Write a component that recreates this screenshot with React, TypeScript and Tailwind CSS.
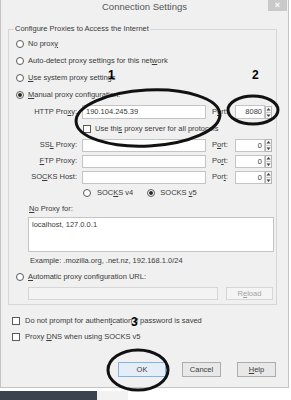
import React from "react";

const Radio = ({ checked = false }: { checked?: boolean }) => (
  <span className="w-[8px] h-[8px] shrink-0 rounded-full border border-[#5a5a5a] bg-white flex items-center justify-center">
    {checked && <span className="w-[4px] h-[4px] rounded-full bg-[#2a2a2a]" />}
  </span>
);

const Check = () => <span className="w-[8px] h-[8px] shrink-0 border border-[#5a5a5a] bg-white" />;

const U = ({ children }: { children: React.ReactNode }) => <span className="underline underline-offset-1">{children}</span>;

const Spinner = () => (
  <svg width="7" height="13" viewBox="0 0 7 13" className="shrink-0">
    <rect x="0.5" y="0.5" width="6" height="12" fill="#f4f4f4" stroke="#b5b5b5" />
    <line x1="0.5" y1="6.5" x2="6.5" y2="6.5" stroke="#c8c8c8" />
    <polygon points="3.5,2 5.5,4.5 1.5,4.5" fill="#444" />
    <polygon points="1.5,8.5 5.5,8.5 3.5,11" fill="#444" />
  </svg>
);

const ProxyRow = ({ label, port, portLabel }: { label: React.ReactNode; port: string; portLabel: React.ReactNode }) => (
  <div className="flex items-center h-[16px]">
    <div className="w-[68px] text-right">{label}</div>
    <div className="ml-[5px] w-[124px] h-[13px] bg-white border border-[#c4c4c4]" />
    <div className="ml-[6px] w-[23px]">{portLabel}</div>
    <div className="w-[30px] h-[13px] bg-white border border-[#c4c4c4] text-right pr-[2px] leading-[11px]">{port}</div>
    <Spinner />
  </div>
);

const Button = ({ children, w, primary = false }: { children: React.ReactNode; w: string; primary?: boolean }) => (
  <div className={`${w} h-[15px] flex items-center justify-center border ${primary ? "border-[#7eb4ea] bg-[#e5eef7]" : "border-[#adadad] bg-[#e8e8e8]"}`}>
    {children}
  </div>
);

export default function App() {
  return (
    <div className="relative w-[291px] h-[400px] overflow-hidden bg-white text-[7.5px] leading-[10px] text-[#3a3a3a]" style={{ fontFamily: '"Liberation Sans", Arial, sans-serif' }}>
      <div className="w-[289px] h-[388px] shrink-0 bg-[#f0f0f0] border-x border-b border-[#c4c4c4] flex flex-col">
        <div className="grid grid-cols-[1fr_auto_1fr] h-[17px] shrink-0">
          <div />
          <div className="text-[9.5px] leading-[14px] text-[#555]">Connection Settings</div>
          <div className="flex justify-end pr-[1px]">
            <div className="w-[19px] h-[11px] bg-[#c9c9c9] text-white text-[9px] leading-[10px] text-center font-bold">×</div>
          </div>
        </div>

        {/* group box */}
        <div className="ml-[7px] mt-[12px] w-[269px] border border-[#d6d6d6] pb-[4px] shrink-0">
          <div className="-mt-[6px] ml-[5px] px-[1px] w-fit h-[10px] bg-[#f0f0f0]">Configure Proxies to Access the Internet</div>
          <div className="mt-[1px] pl-[7px] flex flex-col">
            <div className="flex items-center gap-[4px] h-[17px]"><Radio /><span>No prox<U>y</U></span></div>
            <div className="flex items-center gap-[4px] h-[17px]"><Radio /><span>Auto-detect proxy settings for this net<U>w</U>ork</span></div>
            <div className="flex items-center gap-[4px] h-[17px]"><Radio /><span><U>U</U>se system proxy settings</span></div>
            <div className="flex items-center gap-[4px] h-[17px]"><Radio checked /><span><U>M</U>anual proxy configuration:</span></div>
          </div>
          <div className="flex flex-col">
            <div className="flex items-center h-[18px]">
              <div className="w-[68px] text-right">HTTP Pro<U>x</U>y:</div>
              <div className="ml-[5px] w-[124px] h-[14px] bg-white border border-[#c4c4c4] pl-[3px] leading-[12px]">190.104.245.39</div>
              <div className="ml-[6px] w-[23px]">P<U>o</U>rt:</div>
              <div className="w-[30px] h-[14px] bg-white border border-[#c4c4c4] text-right pr-[2px] leading-[12px]">8080</div>
              <Spinner />
            </div>
            <div className="flex items-center gap-[4px] h-[16px] pl-[74px]"><Check /><span>Use thi<U>s</U> proxy server for all protocols</span></div>
            <ProxyRow label={<>SS<U>L</U> Proxy:</>} port="0" portLabel={<>P<U>o</U>rt:</>} />
            <ProxyRow label={<><U>F</U>TP Proxy:</>} port="0" portLabel={<>Po<U>r</U>t:</>} />
            <ProxyRow label={<>SO<U>C</U>KS Host:</>} port="0" portLabel={<>Por<U>t</U>:</>} />
            <div className="flex items-center h-[16px] pl-[74px]">
              <Radio /><span className="ml-[6px]">SOC<U>K</U>S v4</span>
              <span className="ml-[14px]"><Radio checked /></span><span className="ml-[5px]">SOCKS <U>v</U>5</span>
            </div>
          </div>
          <div className="pl-[19px] flex flex-col">
            <div className="h-[16px] flex items-center pl-[1px]"><span><U>N</U>o Proxy for:</span></div>
            <div className="w-[246px] h-[35px] bg-white border border-[#c4c4c4] pl-[3px] pt-[2px]">localhost, 127.0.0.1</div>
            <div className="h-[17px] flex items-center pl-[2px]">Example: .mozilla.org, .net.nz, 192.168.1.0/24</div>
          </div>
          <div className="pl-[7px] flex items-center gap-[4px] h-[15px]"><Radio /><span><U>A</U>utomatic proxy configuration URL:</span></div>
          <div className="pl-[19px] mt-[3px] flex items-center gap-[8px]">
            <div className="w-[190px] h-[13px] bg-[#f3f3f3] border border-[#d6d6d6]" />
            <div className="w-[47px] h-[13px] bg-[#f4f4f4] border border-[#d6d6d6] text-[#a3a3a3] flex items-center justify-center"><span>R<U>e</U>load</span></div>
          </div>
        </div>

        <div className="pl-[11px] mt-[8px] flex flex-col shrink-0">
          <div className="flex items-center gap-[5px] h-[16px]"><Check /><span>Do not prompt for authent<U>i</U>cation if password is saved</span></div>
          <div className="flex items-center gap-[5px] h-[16px]"><Check /><span>Proxy <U>D</U>NS when using SOCKS v5</span></div>
        </div>

        <div className="mt-[17px] flex justify-end gap-[16px] pr-[12px] shrink-0">
          <Button w="w-[48px]" primary>OK</Button>
          <Button w="w-[39px]">Cancel</Button>
          <Button w="w-[39px]"><span><U>H</U>elp</span></Button>
        </div>
      </div>

      <div className="mt-[3px] flex h-[9px]">
        <div className="w-[97px] bg-[#3a444e]" />
        <div className="w-[31px] bg-[#f2f2f2]" />
      </div>

      <svg className="absolute inset-0 pointer-events-none" width="291" height="400" viewBox="0 0 291 400">
        <ellipse cx="148" cy="118" rx="72" ry="28" transform="rotate(-3 148 118)" fill="none" stroke="#111" strokeWidth="3" />
        <ellipse cx="253" cy="110" rx="25" ry="14" fill="none" stroke="#111" strokeWidth="3" />
        <ellipse cx="138" cy="370" rx="30" ry="20" fill="none" stroke="#111" strokeWidth="3" />
      </svg>
      <span className="absolute left-[108px] top-[69px] text-[12px] leading-[12px] font-bold text-black">1</span>
      <span className="absolute left-[252px] top-[69px] text-[12px] leading-[12px] font-bold text-black">2</span>
      <span className="absolute left-[131px] top-[316px] text-[12px] leading-[12px] font-bold text-black">3</span>
    </div>
  );
}
